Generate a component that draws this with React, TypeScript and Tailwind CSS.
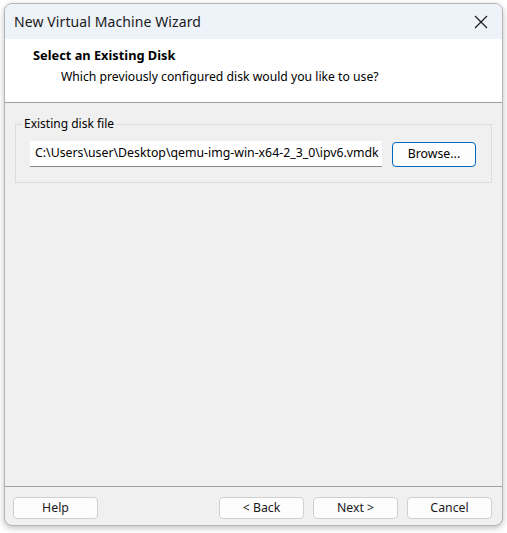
import React from "react";

const font = { fontFamily: '"Noto Sans", "Open Sans", Arial, sans-serif' };

function Btn({ children, className = "" }: { children: React.ReactNode; className?: string }) {
  return (
    <div
      className={`h-[22px] w-[85px] flex items-center justify-center rounded-[4px] border border-[#d0d0d0] bg-[#fdfdfd] text-[12.3px] text-[#1a1a1a] ${className}`}
    >
      {children}
    </div>
  );
}

export default function App() {
  return (
    <div className="w-[507px] h-[533px] bg-white pt-[3px] pl-[4px]" style={font}>
      <div className="w-[499px] h-[523px] rounded-[8px] border border-[#b4b4b4] overflow-hidden flex flex-col shadow-[0_2px_6px_rgba(0,0,0,0.25)] bg-[#f0f0f0]">
        <div className="h-[35px] bg-[#eef2f9] flex items-center justify-between pl-[9px] pr-[14px] shrink-0">
          <span className="text-[14px] tracking-[0.1px] text-[#1a1a1a]">New Virtual Machine Wizard</span>
          <svg width="14" height="14" viewBox="0 0 14 14">
            <path d="M1 1 L13 13 M13 1 L1 13" stroke="#1a1a1a" strokeWidth="1.2" />
          </svg>
        </div>
        <div className="h-[64px] bg-white border-b border-[#a0a0a0] shrink-0 pt-[7px]">
          <div className="pl-[28px] text-[12.8px] font-bold text-black leading-[18px]">Select an Existing Disk</div>
          <div className="pl-[56px] text-[12.2px] text-[#000] leading-[18px] mt-[4px]">
            Which previously configured disk would you like to use?
          </div>
        </div>
        <div className="flex-1 flex flex-col">
          <div className="mx-[10px] mt-[21px] relative border border-[#dcdcdc] h-[59px]">
            <span className="absolute -top-[10px] left-[6px] px-[2px] bg-[#f0f0f0] text-[12px] leading-[18px] text-black">
              Existing disk file
            </span>
            <div className="flex items-center mt-[16px] ml-[14px] gap-[10px]">
              <div className="w-[352px] h-[26px] bg-white border-b border-[#8a8a8a] flex items-center pl-[5px] text-[12.3px] text-black overflow-hidden whitespace-nowrap">
                C:\Users\user\Desktop\qemu-img-win-x64-2_3_0\ipv6.vmdk
              </div>
              <div className="w-[84px] h-[25px] rounded-[4px] border border-[#0067c0] bg-[#fdfdfd] flex items-center justify-center text-[12.3px] text-black">
                Browse...
              </div>
            </div>
          </div>
          <div className="flex-1" />
          <div className="border-t border-[#a0a0a0] h-[39px] shrink-0 flex items-start pt-[10px] pl-[8px] pr-[10px]">
            <Btn>Help</Btn>
            <div className="flex-1" />
            <div className="flex gap-[9px]">
              <Btn>&lt; Back</Btn>
              <Btn>Next &gt;</Btn>
              <Btn>Cancel</Btn>
            </div>
          </div>
        </div>
      </div>
    </div>
  );
}
